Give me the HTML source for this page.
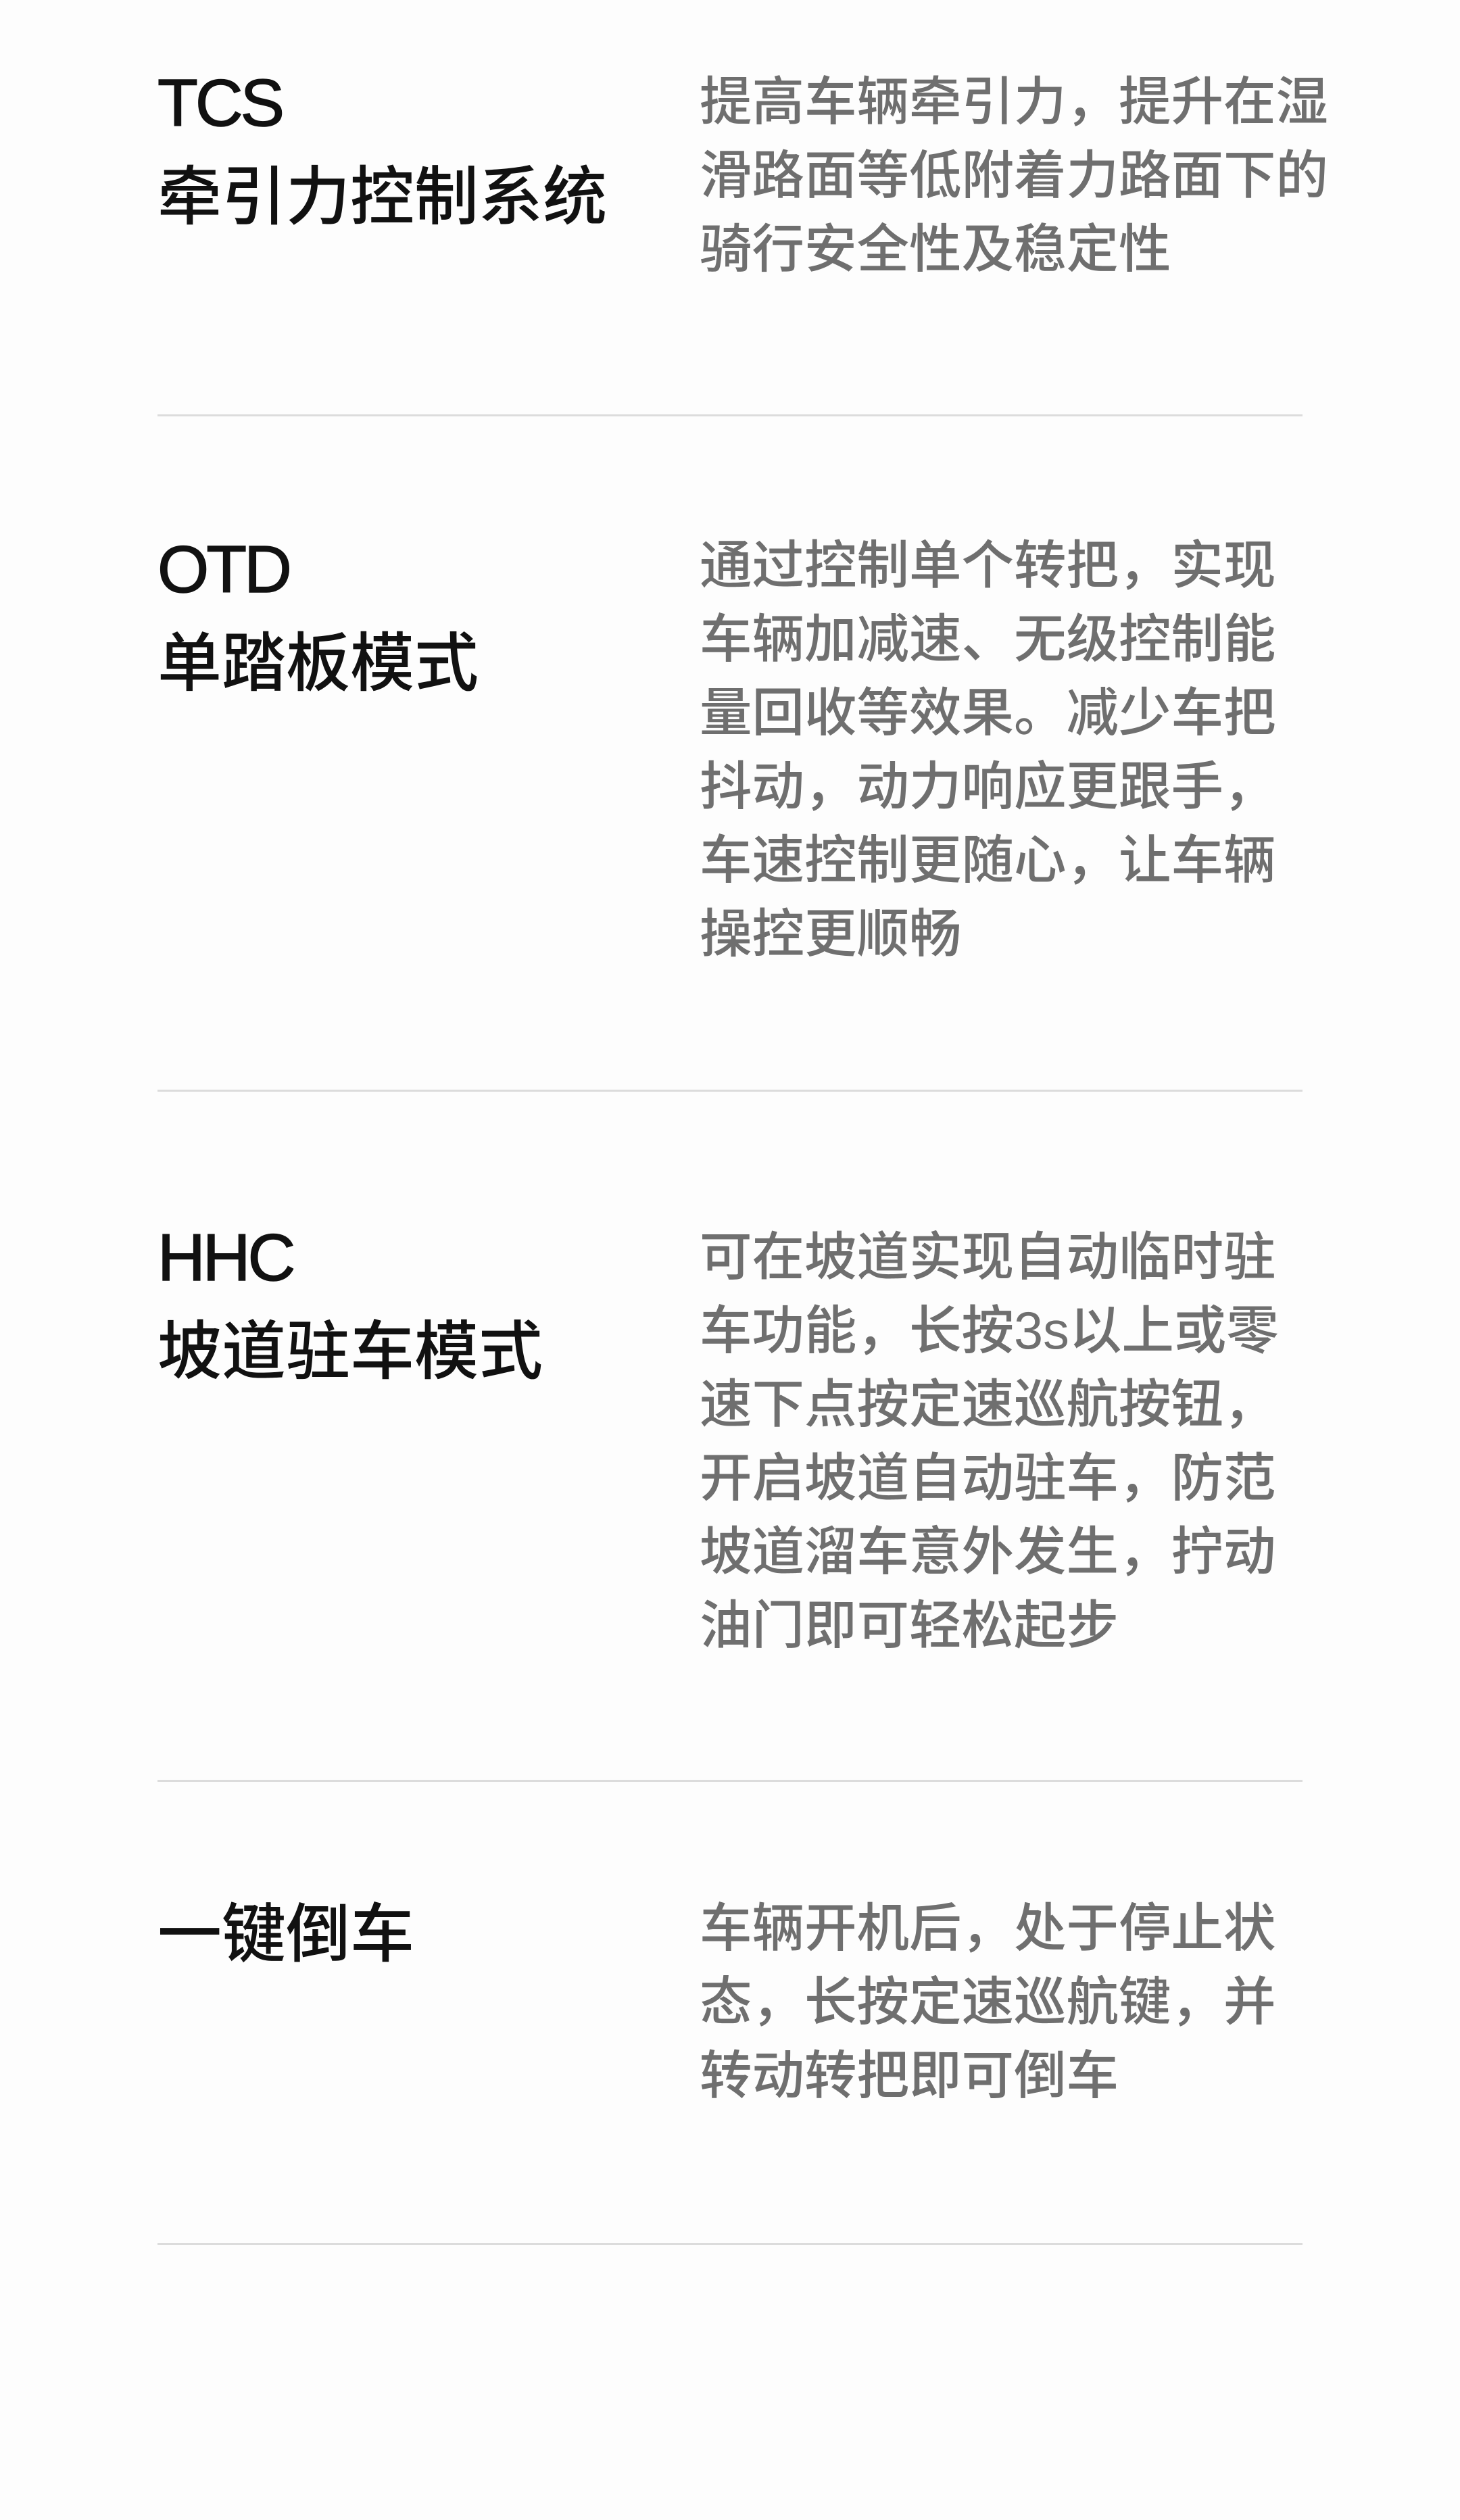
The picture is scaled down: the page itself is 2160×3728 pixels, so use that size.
<!DOCTYPE html>
<html><head><meta charset="utf-8"><style>
html,body{margin:0;padding:0;background:#fdfdfd;}
body{width:2160px;height:3728px;position:relative;overflow:hidden;font-family:"Liberation Sans","Noto Sans CJK SC",sans-serif;}
.t{position:absolute;left:233px;color:#111;font-size:95px;line-height:138px;font-weight:500;white-space:nowrap;}
.t .en{font-size:98px;font-weight:400;letter-spacing:-4px;-webkit-text-stroke:1.5px #111;}
.d{position:absolute;left:1035px;color:#6f6f6f;font-size:77.5px;line-height:109px;font-weight:500;white-space:nowrap;}
.hr{position:absolute;left:233px;width:1694px;height:3px;background:#dcdcdc;}
</style></head><body>
<div class="t" style="top:83px"><span class="en">TCS</span><br>牵引力控制系统</div>
<div class="d" style="top:97px">提高车辆牵引力，提升在湿<br>滑路面等低附着力路面下的<br>骑行安全性及稳定性</div>
<div class="hr" style="top:613px"></div>

<div class="t" style="top:773px"><span class="en">OTD</span><br>单踏板模式</div>
<div class="d" style="top:783px">通过控制单个转把，实现<br>车辆加减速、无级控制能<br>量回收等效果。减少车把<br>抖动，动力响应更跟手，<br>车速控制更随心，让车辆<br>操控更顺畅</div>
<div class="hr" style="top:1612px"></div>

<div class="t" style="top:1791px"><span class="en">HHC</span><br>坡道驻车模式</div>
<div class="d" style="top:1806px">可在坡道实现自动临时驻<br>车功能，长按3s以上或零<br>速下点按定速巡航按钮，<br>开启坡道自动驻车，防范<br>坡道溜车意外发生，拧动<br>油门即可轻松起步</div>
<div class="hr" style="top:2633px"></div>

<div class="t" style="top:2793px">一键倒车</div>
<div class="d" style="top:2799px">车辆开机后，处于停止状<br>态，长按定速巡航键，并<br>转动转把即可倒车</div>
<div class="hr" style="top:3318px"></div>
</body></html>
